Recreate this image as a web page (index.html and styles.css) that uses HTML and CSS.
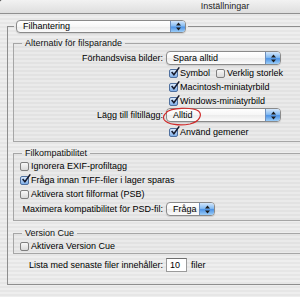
FILE: index.html
```html
<!DOCTYPE html>
<html lang="sv">
<head>
<meta charset="utf-8">
<title>Inställningar</title>
<link rel="stylesheet" href="styles.css">
</head>
<body>
<div class="window">
  <div class="titlebar">Inställningar</div>
  <fieldset class="outer">
    <legend class="outer-legend">
      <span class="popup popup-section">
        <span class="popup-text">Filhantering</span>
        <span class="popup-arrows"><svg viewBox="0 0 7 9" width="7" height="9"><path d="M3.5 0.5 L6 3.5 L1 3.5 Z M3.5 8.5 L6 5.5 L1 5.5 Z" fill="#1c1c1c"/></svg></span>
      </span>
    </legend>

    <fieldset class="group group-save">
      <legend>Alternativ för filsparande</legend>
      <div class="frow">
        <span class="label">Förhandsvisa bilder:</span>
        <span class="popup popup-wide">
          <span class="popup-text">Spara alltid</span>
          <span class="popup-arrows"><svg viewBox="0 0 7 9" width="7" height="9"><path d="M3.5 0.5 L6 3.5 L1 3.5 Z M3.5 8.5 L6 5.5 L1 5.5 Z" fill="#1c1c1c"/></svg></span>
        </span>
      </div>
      <div class="frow first-check">
        <div class="checks">
          <span class="check"><span class="cb on"><svg viewBox="0 0 11 11"><path d="M1.8 5.6 L4.3 8.6 L10.2 0.4" fill="none" stroke="#15192b" stroke-width="1.7"/></svg></span>Symbol</span>
          <span class="check"><span class="cb"></span>Verklig storlek</span>
        </div>
      </div>
      <div class="frow">
        <div class="checks">
          <span class="check"><span class="cb on"><svg viewBox="0 0 11 11"><path d="M1.8 5.6 L4.3 8.6 L10.2 0.4" fill="none" stroke="#15192b" stroke-width="1.7"/></svg></span>Macintosh-miniatyrbild</span>
        </div>
      </div>
      <div class="frow">
        <div class="checks">
          <span class="check"><span class="cb on"><svg viewBox="0 0 11 11"><path d="M1.8 5.6 L4.3 8.6 L10.2 0.4" fill="none" stroke="#15192b" stroke-width="1.7"/></svg></span>Windows-miniatyrbild</span>
        </div>
      </div>
      <div class="frow">
        <span class="label">Lägg till filtillägg:</span>
        <span class="popup popup-wide marked">
          <span class="popup-text">Alltid</span>
          <span class="popup-arrows"><svg viewBox="0 0 7 9" width="7" height="9"><path d="M3.5 0.5 L6 3.5 L1 3.5 Z M3.5 8.5 L6 5.5 L1 5.5 Z" fill="#1c1c1c"/></svg></span>
          <svg class="ring" viewBox="0 0 40 20" width="40" height="20"><path d="M4 6.5 C9 1.5 30 0.8 36.5 5 C40.5 8.5 38 15.5 28 18 C18 20 5 18.6 2 13.5 C0.6 10.5 2 8.3 5 6.2" fill="none" stroke="#cf2a2a" stroke-width="1.2"/></svg>
        </span>
      </div>
      <div class="frow last-check">
        <div class="checks">
          <span class="check"><span class="cb on"><svg viewBox="0 0 11 11"><path d="M1.8 5.6 L4.3 8.6 L10.2 0.4" fill="none" stroke="#15192b" stroke-width="1.7"/></svg></span>Använd gemener</span>
        </div>
      </div>
    </fieldset>

    <fieldset class="group group-compat">
      <legend>Filkompatibilitet</legend>
      <div class="crow"><span class="check"><span class="cb"></span>Ignorera EXIF-profiltagg</span></div>
      <div class="crow"><span class="check"><span class="cb on"><svg viewBox="0 0 11 11"><path d="M1.8 5.6 L4.3 8.6 L10.2 0.4" fill="none" stroke="#15192b" stroke-width="1.7"/></svg></span>Fråga innan TIFF-filer i lager sparas</span></div>
      <div class="crow"><span class="check"><span class="cb"></span>Aktivera stort filformat (PSB)</span></div>
      <div class="frow max-row">
        <span class="label">Maximera kompatibilitet för PSD-fil:</span>
        <span class="popup popup-small">
          <span class="popup-text">Fråga</span>
          <span class="popup-arrows"><svg viewBox="0 0 7 9" width="7" height="9"><path d="M3.5 0.5 L6 3.5 L1 3.5 Z M3.5 8.5 L6 5.5 L1 5.5 Z" fill="#1c1c1c"/></svg></span>
        </span>
      </div>
    </fieldset>

    <fieldset class="group group-cue">
      <legend>Version Cue</legend>
      <div class="crow"><span class="check"><span class="cb"></span>Aktivera Version Cue</span></div>
    </fieldset>

    <div class="recent">
      <span class="label">Lista med senaste filer innehåller:</span>
      <span class="field">10</span>
      <span class="unit">filer</span>
    </div>
  </fieldset>
</div>
</body>
</html>
```

FILE: styles.css
```css
html {
  background: #4a4a4a;
}

body {
  margin: 0;
  width: 300px;
  height: 297px;
  overflow: hidden;
  font-family: "Liberation Sans", Arial, sans-serif;
  font-size: 9px;
  color: #000;
}

.window {
  width: 300px;
  height: 297px;
  background: repeating-linear-gradient(to bottom, #eeeeee 0, #eeeeee 2px, #e6e6e6 2px, #e6e6e6 4px);
  border-top-left-radius: 3px;
  overflow: hidden;
}

/* the window is wider than the crop: its title is centred on x = 225 */
.titlebar {
  height: 13px;
  line-height: 13px;
  padding-left: 150px;
  border-bottom: 1px solid #909090;
  background: linear-gradient(#f2f2f2, #dedede);
  text-align: center;
  color: #1e1e1e;
}

fieldset {
  margin: 0;
  min-width: 0;
}

.outer {
  margin: 6px 0 0 7px;
  padding: 5px 0 12px 5px;
  border: 1px solid #8e8e8e;
  border-right: none;
}

.outer-legend {
  padding: 0 2px;
  margin-left: 1px;
  height: 13px;
}

.group {
  padding: 2px 0 2px 6px;
  border: 1px solid #a6a6a6;
  border-right: none;
  background: rgba(0, 0, 0, 0.015);
}

.group legend {
  padding: 0 3px;
  margin-left: 2px;
  line-height: 11px;
  color: #111;
}

.group-compat {
  margin-top: 6px;
  padding: 0 0 4px 6px;
}

.group-cue {
  margin-top: 7px;
  padding: 0 0 0 6px;
}

/* popup buttons */
.popup {
  position: relative;
  display: flex;
  height: 14px;
  box-sizing: border-box;
  border: 1px solid #8a8a8a;
  border-radius: 4px;
  background: linear-gradient(#ffffff, #f6f6f6 50%, #ebebeb 52%, #fbfbfb);
  box-shadow: 0 1px 1px rgba(0, 0, 0, 0.12);
}

.popup-section {
  width: 170px;
  height: 13px;
}

.popup-wide {
  width: 115px;
}

.popup-small {
  width: 49px;
}

.popup-text {
  flex: 1;
  padding-left: 6px;
  line-height: 12px;
  white-space: nowrap;
}

.popup-section .popup-text {
  line-height: 11px;
}

.popup-arrows {
  width: 14px;
  display: flex;
  align-items: center;
  justify-content: center;
  border-left: 1px solid #6d8fbd;
  border-radius: 0 3px 3px 0;
  background: linear-gradient(#d4e7fb, #86bcf2 45%, #4e94e6 55%, #9ccdf7);
}

.ring {
  position: absolute;
  left: -5px;
  top: -3px;
  overflow: visible;
}

/* form rows */
.frow {
  display: grid;
  grid-template-columns: 143px max-content;
  column-gap: 3px;
  height: 14px;
  align-items: center;
}

.label {
  text-align: right;
  white-space: nowrap;
}

.checks {
  grid-column: 2;
  display: flex;
  gap: 6px;
  padding-left: 3px;
}

.first-check {
  margin-top: 1px;
}

.last-check {
  margin-top: 3px;
}

.max-row {
  margin-top: 1px;
}

.crow {
  height: 14px;
  display: flex;
  align-items: center;
}

.check {
  display: flex;
  align-items: center;
  white-space: nowrap;
}

.cb {
  position: relative;
  flex: none;
  width: 9px;
  height: 9px;
  box-sizing: border-box;
  margin-right: 2px;
  border: 1px solid #7f7f7f;
  border-radius: 2px;
  background: linear-gradient(#f8f8f8, #d9d9d9);
}

.cb.on {
  border-color: #4f709f;
  background: linear-gradient(#d8e8fb, #80afe9);
}

.cb svg {
  position: absolute;
  left: 0;
  top: -3px;
  width: 10px;
  height: 10px;
  overflow: visible;
}

/* recent files */
.recent {
  display: grid;
  grid-template-columns: 150px max-content max-content;
  column-gap: 3px;
  align-items: center;
  height: 14px;
  margin-top: 4px;
}

.field {
  width: 21px;
  height: 14px;
  box-sizing: border-box;
  padding-left: 3px;
  line-height: 12px;
  background: #fff;
  border: 1px solid #9a9a9a;
  border-top-color: #6e6e6e;
}

.unit {
  margin-left: 1px;
}
```
